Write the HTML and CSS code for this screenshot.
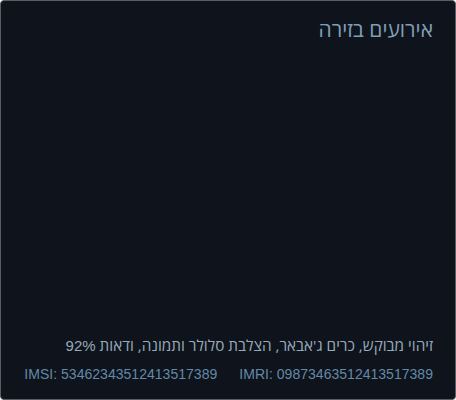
FILE: index.html
```html
<!DOCTYPE html>
<html lang="he" dir="rtl">
<head>
<meta charset="utf-8">
<link rel="stylesheet" href="styles.css">
</head>
<body>
<div class="panel">
  <h1 class="title">אירועים בזירה</h1>
  <div class="spacer"></div>
  <div class="footer">
    <p class="desc">זיהוי מבוקש, כרים ג'אבאר, הצלבת סלולר ותמונה, ודאות <span class="latin">92%</span></p>
    <div class="ids">
      <span class="id" dir="ltr">IMRI: 09873463512413517389</span>
      <span class="id" dir="ltr">IMSI: 53462343512413517389</span>
    </div>
  </div>
</div>
</body>
</html>
```

FILE: styles.css
```css
html, body {
  margin: 0;
  padding: 0;
  background: #ffffff;
}
.panel {
  box-sizing: border-box;
  width: 456px;
  height: 400px;
  background: #0f131b;
  border: 1px solid #5a5d62;
  border-radius: 4px;
  display: flex;
  flex-direction: column;
  padding: 14px 22px 16px 22px;
  font-family: "Liberation Sans", Arial, sans-serif;
}
.title {
  margin: 0;
  font-family: "Open Sans", "Liberation Sans", sans-serif;
  font-size: 21px;
  font-weight: normal;
  color: #7f9fb7;
  line-height: 28px;
}
.spacer {
  flex: 1;
}
.footer {
  display: flex;
  flex-direction: column;
  gap: 10px;
}
.desc {
  margin: 0;
  font-family: "Open Sans", "Liberation Sans", sans-serif;
  font-size: 15.3px;
  line-height: 20px;
  color: #98aabb;
}
.latin {
  font-family: "Liberation Sans", Arial, sans-serif;
  font-size: 15px;
}
.ids {
  display: flex;
  gap: 22px;
  white-space: nowrap;
}
.id {
  flex: none;
  font-size: 14.05px;
  line-height: 17px;
  color: #6389a8;
}
```
